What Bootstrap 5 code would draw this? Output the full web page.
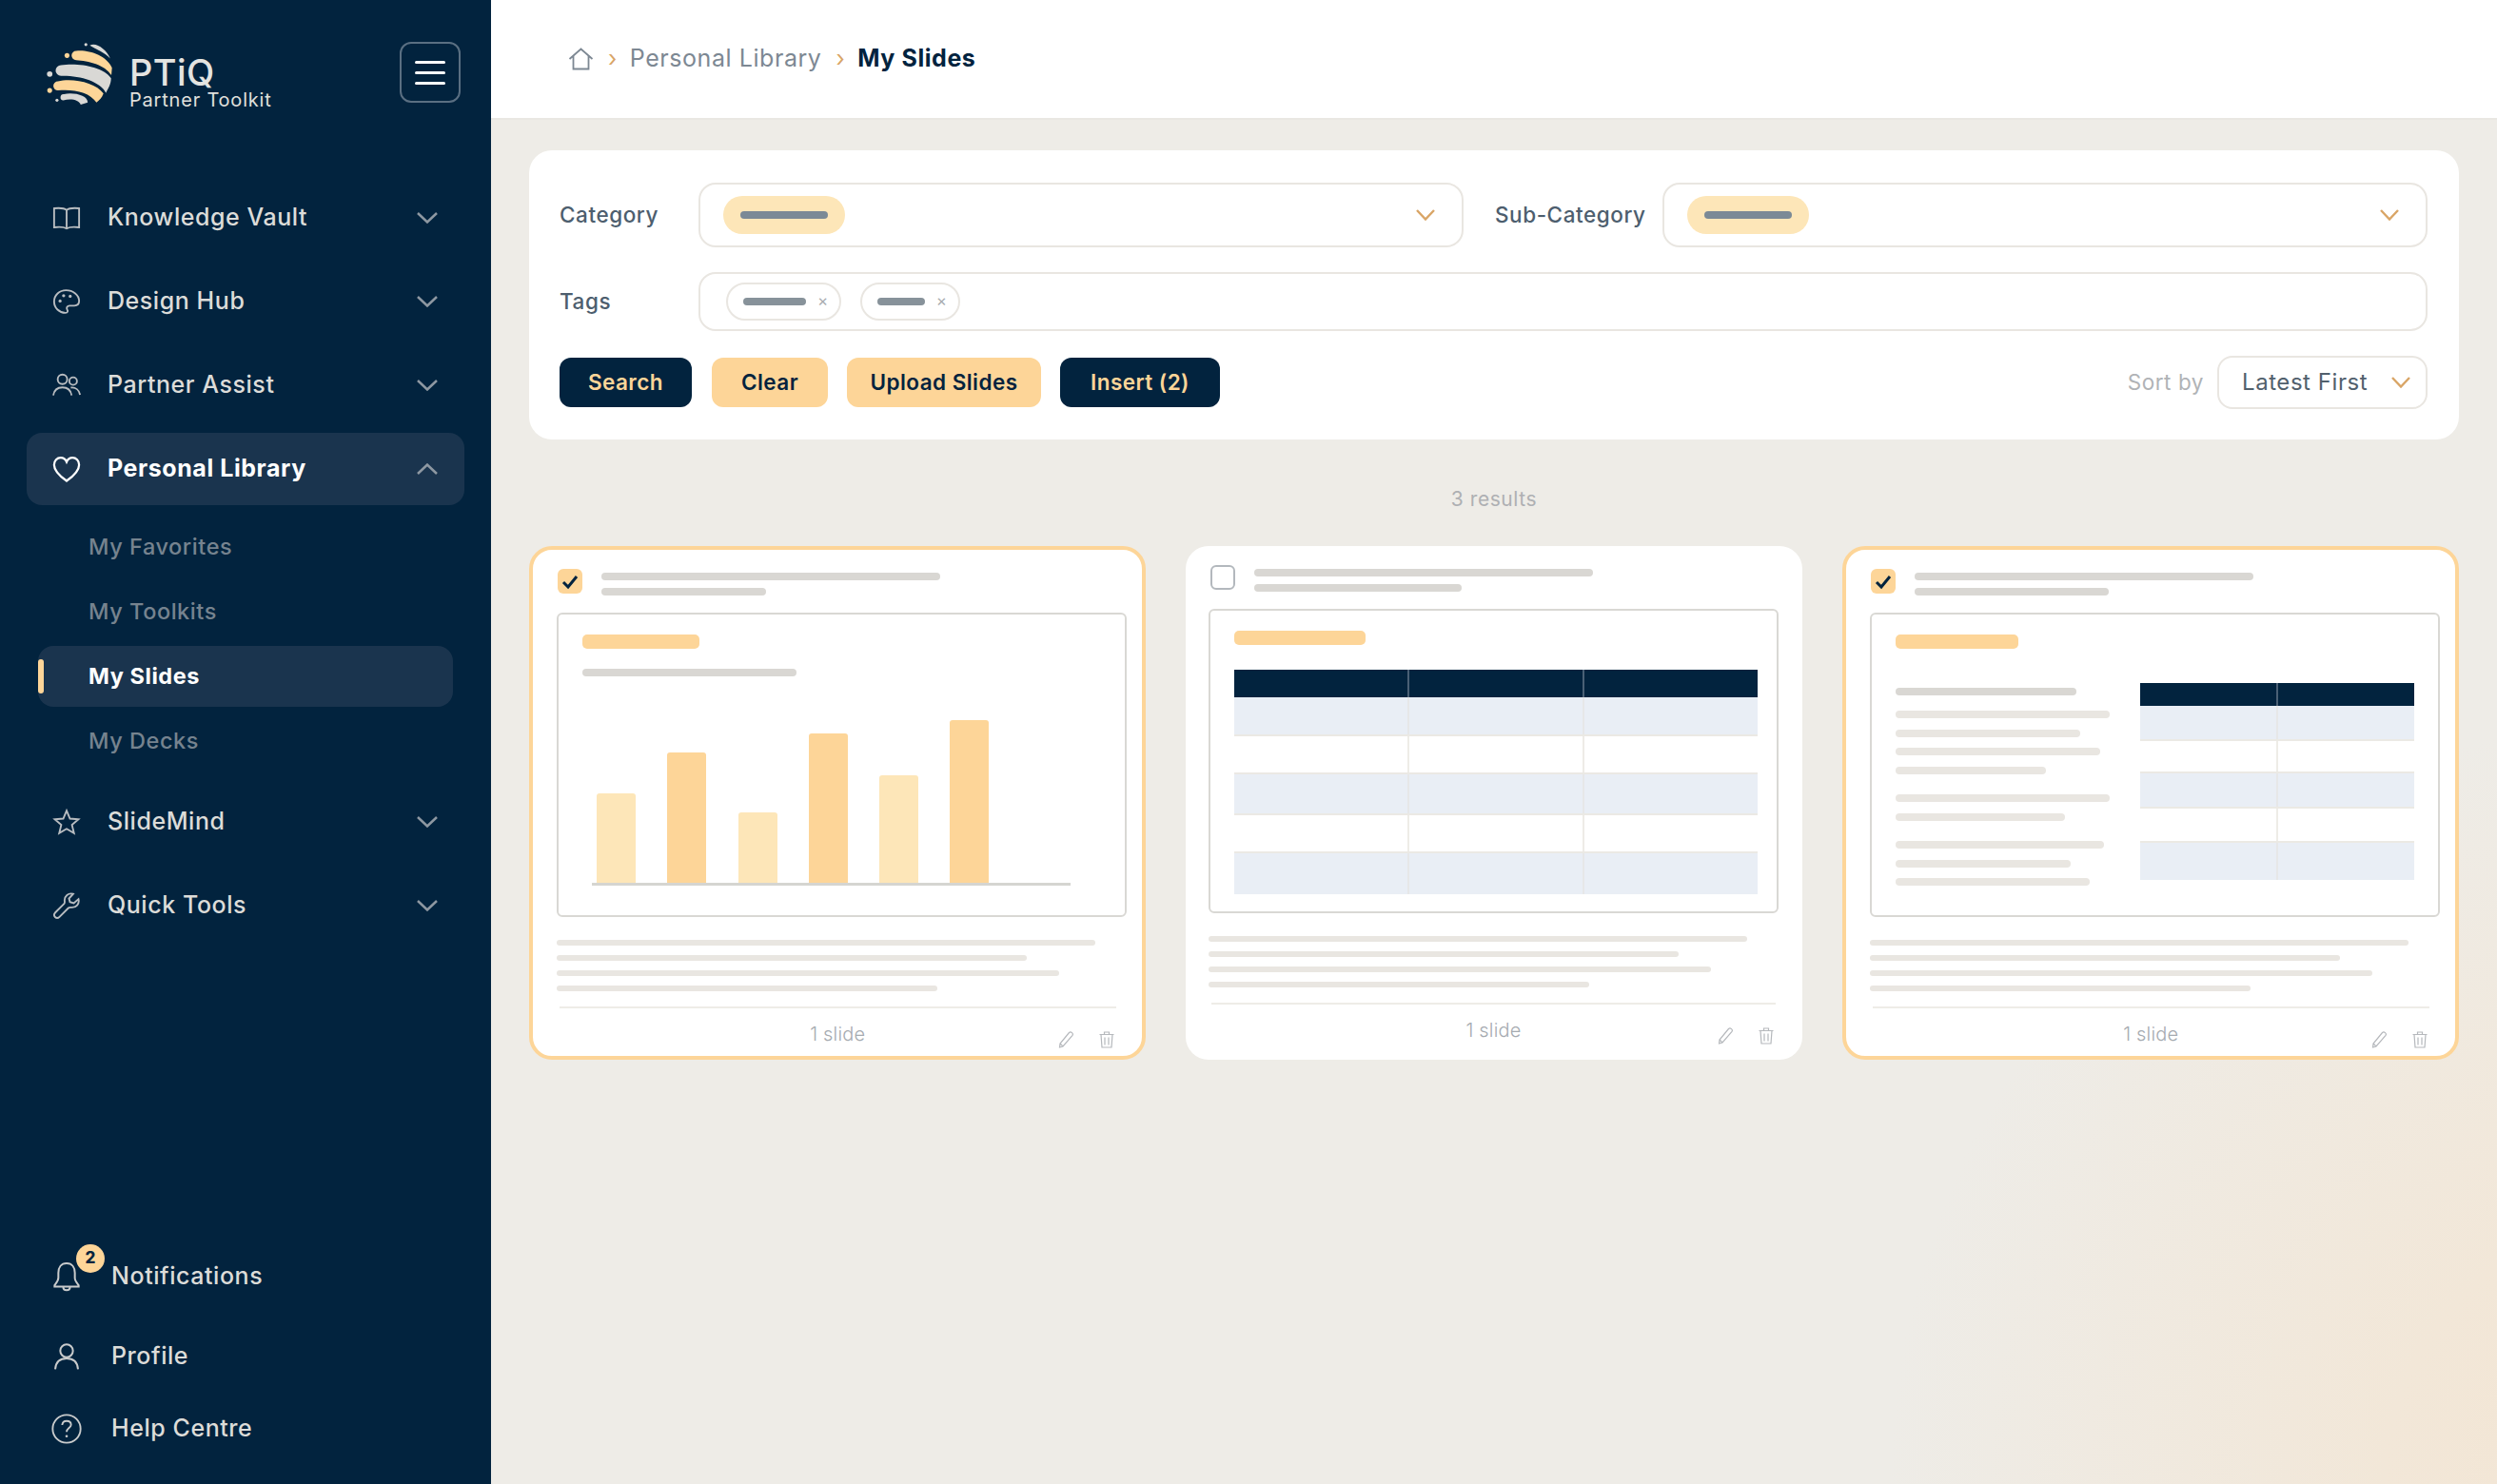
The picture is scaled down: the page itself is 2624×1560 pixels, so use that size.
<!DOCTYPE html>
<html lang="en"><head><meta charset="utf-8"><title>PTiQ</title>
<link href="https://cdn.jsdelivr.net/npm/bootstrap@5.3.0/dist/css/bootstrap.min.css" rel="stylesheet">
<style>
:root{--navy:#02233e;--peach:#fdd598;--cream:#fde6b8;--line:#e9e6e1;--bar:#d9d7d3;}
html,body{height:100%;}
body{font-family:Inter,"Liberation Sans",sans-serif;background:#eeece7;overflow:hidden;letter-spacing:.035em;}
.app-shell{height:1560px;width:2624px;}
.side-panel{width:516px;flex:none;background:var(--navy);height:1560px;padding:0 28px 20px;color:#dcdcd9;}
.brand-row{height:191px;padding:44px 4px 0 20px;}
.brand-name{font-size:38px;line-height:38px;font-weight:500;color:#e4e4e1;margin-top:13px;letter-spacing:.01em;}
.brand-sub{font-size:20px;line-height:22px;color:#e0e0dd;margin-top:-1px;letter-spacing:.04em;}
.burger{width:64px;height:64px;border:2px solid #5a6f82;border-radius:12px;background:transparent;padding:0;}
.burger span{display:block;width:32px;height:3px;background:#fff;border-radius:2px;margin:8px auto;}
.nav-entry{height:76px;margin-bottom:12px;padding:0 28px 0 27px;border-radius:16px;font-size:25px;font-weight:500;color:#dcdcd9;}
.nav-entry .ico{width:30px;height:30px;margin-right:28px;flex:none;color:#b9bdc1;}
.nav-entry.is-open{background:#1a344e;color:#fff;font-weight:700;}
.nav-entry.is-open .ico{color:#fff;}
.ico svg,.fill-svg{display:block;width:100%;height:100%;}
.chev{width:22px;height:12px;flex:none;}
.sub-list{margin:0 12px 11px;}
.sub-entry{height:64px;margin-bottom:4px;padding-left:53px;font-size:23.5px;font-weight:500;color:#76838f;border-radius:16px;position:relative;}
.sub-entry.is-here{background:#1a344e;color:#fff;font-weight:700;}
.sub-entry.is-here::before{content:"";position:absolute;left:0;top:14px;width:6px;height:36px;border-radius:3px;background:var(--peach);}
.foot-entry{height:76px;padding-left:26px;font-size:25px;font-weight:500;color:#dcdcd9;position:relative;}
.foot-entry .ico{width:32px;height:32px;margin-right:31px;color:#c9cbcc;flex:none;}
.note-dot{position:absolute;left:52px;top:4px;width:30px;height:30px;border-radius:50%;background:var(--peach);color:var(--navy);font-size:17px;font-weight:800;display:flex;align-items:center;justify-content:center;letter-spacing:0;}
.main-panel{background:radial-gradient(ellipse 800px 800px at 2270px 1560px,#f3e5d3 0%,#f2e7d8 35%,#eeece7 100%);height:1560px;}
.crumb-bar{height:126px;background:#fff;border-bottom:2px solid #e9e7e2;padding-left:81px;font-size:25px;color:#7d8893;}
.crumb-sep{color:#d9a566;margin:0 13px 0 15px;font-size:24px;}
.crumb-now{color:var(--navy);font-weight:700;}
.work-area{padding:32px 40px 0;}
.filter-box{background:#fff;border-radius:24px;height:304px;padding:34px 33px 32px 32px;}
.f-row{margin-bottom:26px;}
.f-label{width:146px;flex:none;font-size:22.5px;font-weight:500;color:#4d5e6e;}
.f-label.second{width:176px;margin-left:33px;}
.f-select{flex:1 1 0;height:68px;border:2px solid var(--line);border-radius:18px;padding:0 28px 0 24px;}
.f-tags{flex:1 1 0;height:62px;border:2px solid var(--line);border-radius:18px;padding:0 0 0 27px;gap:20px;}
.pick-pill{width:128px;height:40px;background:var(--cream);border-radius:20px;display:flex;align-items:center;justify-content:center;}
.pick-pill i{display:block;width:92px;height:8px;background:#7b8a96;border-radius:4px;}
.v-chev{width:20px;height:12px;flex:none;}
.tag-chip{height:40px;border:2px solid var(--line);border-radius:20px;padding:0 11px 0 16px;font-size:17px;color:#a9adb1;font-style:normal;}
.tag-chip b{display:block;height:8px;background:#87929a;border-radius:4px;margin-right:12px;}
.act-row{height:56px;}
.btn-nvy,.btn-pch{height:52px;border-radius:12px;border:0;font-size:22.5px;font-weight:600;padding:0;letter-spacing:.02em;}
.btn-nvy{background:var(--navy);color:var(--peach);}
.btn-pch{background:var(--peach);color:var(--navy);}
.btn-nvy:hover{background:var(--navy);color:var(--peach);}
.btn-pch:hover{background:var(--peach);color:var(--navy);}
.sort-lbl{font-size:22.5px;color:#b0b3b6;margin-right:14px;}
.sort-box{width:221px;height:56px;border:2px solid var(--line);border-radius:16px;padding:0 16px 0 24px;font-size:24px;color:#51606d;}
.res-count{height:112px;padding-top:49px;text-align:center;font-size:21px;color:#aeb0b3;line-height:28px;}
.cards-row{--bs-gutter-x:42px;--bs-gutter-y:0;}
.slide-card{height:540px;background:#fff;border-radius:24px;padding:20px 25px 0 24px;}
.slide-card.picked{border:4px solid var(--peach);padding:20px 16px 0 25px;}
.tick{width:26px;height:26px;border-radius:6px;flex:none;margin-left:2px;border:2px solid #b3b8bd;}
.picked .tick{background:var(--peach);border:0;margin-left:1px;}
.card-head{gap:20px;height:26px;margin-bottom:20px;}
.bar-t{height:8px;border-radius:4px;background:var(--bar);margin-top:4px;}
.bar-t+.bar-t{margin-top:8px;}
.mini-slide{height:320px;border:2px solid #d9d8d4;border-radius:6px;padding:21px 25px 0;}
.o-bar{height:15px;background:var(--peach);border-radius:5px;}
.g-bar{height:8px;background:var(--bar);border-radius:4px;margin-top:21px;}
.chart-box{height:220px;margin-left:10px;width:503px;border-bottom:3px solid #d5d5d1;padding-left:5px;gap:33.3px;}
.chart-box i{display:block;width:41px;border-radius:3px 3px 0 0;background:var(--peach);}
.chart-box i.lt{background:var(--cream);}
.copy-lines{margin-top:24px;}
.copy-lines i{display:block;height:6px;border-radius:3px;background:var(--line);margin-bottom:10px;}
.card-foot{margin:16px 11.5px 0 3px;border-top:2px solid #eeece7;display:grid;grid-template-columns:1fr auto 1fr;}
.plain-card .card-foot{margin-right:3px;}
.card-foot span{grid-column:2;font-size:20px;font-weight:300;color:#a6abb1;line-height:26px;margin-top:14px;letter-spacing:.01em;}
.foot-tools{grid-column:3;justify-content:flex-end;gap:27px;padding:24px 2px 0 0;}
.foot-tools svg{width:16px;height:18px;display:block;}
.mini-tbl{width:550px;margin-top:26px;}
.mini-row{display:flex;border-bottom:2px solid #ebe9e4;}
.mini-row>i{flex:1 1 0;display:block;}
.mini-row>i+i{border-left:2px solid #eeece7;}
.mini-row.shade{background:#e9eef5;}
.mini-row.shade>i+i{border-left-color:#e6e7e8;}
.mini-row.top{background:var(--navy);border-bottom:0;}
.mini-row.top>i+i{border-left-color:#4a6075;}
.mini-row:last-child{border-bottom:0;}
.two-col{margin-top:36px;}
.lines-col{width:256.5px;padding-top:4.5px;flex:none;}
.lines-col i{display:block;height:8px;border-radius:4px;background:var(--line);margin-bottom:11.5px;}
.lines-col i.hd{background:var(--bar);margin-bottom:16.5px;}
.lines-col i.brk{margin-bottom:21.5px;}
.mini-tbl.narrow{width:292.5px;margin-top:0;}
</style></head>
<body>
<div class="app-shell d-flex">
<aside class="side-panel d-flex flex-column">
  <div class="brand-row d-flex align-items-start justify-content-between">
    <div class="d-flex">
      <svg width="72" height="68" viewBox="50 50 225 213" class="flex-none me-3"><g fill="#d9d8d5"><path d="M195 62C215 50 250 75 262 105 245 85 215 75 195 62Z"/><path d="M100 127C150 118 240 130 265 170 265 190 255 205 248 218 230 180 160 160 100 162A17.500 17.500 0 0 1 100 127Z"/><path d="M110 222C140 215 190 225 188 250L165 257C160 240 130 235 108 243A10.500 10.500 0 0 1 110 222Z"/><circle cx="182" cy="59" r="5"/><circle cx="63" cy="156" r="9"/><circle cx="87" cy="242" r="5"/></g><g fill="#fdd598"><path d="M150 80C190 75 250 95 268 135L266 160C245 125 190 112 150 110A15 15 0 0 1 150 80Z"/><path d="M90 180C140 168 215 185 240 220 235 235 225 243 217 250 195 215 140 205 90 210A15 15 0 0 1 90 180Z"/><circle cx="120" cy="95" r="8"/><circle cx="63" cy="210" r="8"/></g></svg>
      <div><div class="brand-name">PTiQ</div><div class="brand-sub">Partner Toolkit</div></div>
    </div>
    <button class="burger d-flex flex-column justify-content-center" aria-label="menu"><span class="my-1"></span><span class="my-1"></span><span class="my-1"></span></button>
  </div>

  <div class="nav-entry d-flex align-items-center"><span class="ico"><svg viewBox="0 0 24 24" fill="none" stroke="currentColor" stroke-width="1.500"><path d="M12 5.500C10 3.800 6 3.500 1.500 4V20C6 19.500 10 19.800 12 21 14 19.800 18 19.500 22.500 20V4C18 3.500 14 3.800 12 5.500ZM12 5.500V21"/></svg></span><span class="flex-grow-1">Knowledge Vault</span><svg class="chev" viewBox="0 0 22 12" fill="none" stroke="#8e98a2" stroke-width="2.500"><path d="M1 1L11 10.500 21 1"/></svg></div>
  <div class="nav-entry d-flex align-items-center"><span class="ico"><svg viewBox="0 0 24 24" fill="none" stroke="currentColor" stroke-width="1.500"><path d="M11.500 2.500C6 2.500 1.500 6.500 1.500 12S6 21.500 11 21.500C13 21.500 13.300 20 12.500 18.800 11.500 17.200 12.500 15.500 14.500 15.500H18.500C21 15.500 22.500 13.800 22.500 11.500 22.500 6.500 17.500 2.500 11.500 2.500Z"/><g fill="currentColor" stroke="none"><circle cx="6.500" cy="11.500" r="1.300"/><circle cx="9.500" cy="7" r="1.300"/><circle cx="15" cy="7.500" r="1.300"/></g></svg></span><span class="flex-grow-1">Design Hub</span><svg class="chev" viewBox="0 0 22 12" fill="none" stroke="#8e98a2" stroke-width="2.500"><path d="M1 1L11 10.500 21 1"/></svg></div>
  <div class="nav-entry d-flex align-items-center"><span class="ico"><svg viewBox="0 0 24 24" fill="none" stroke="currentColor" stroke-width="1.500"><circle cx="8.500" cy="7" r="4"/><circle cx="17.500" cy="8.500" r="3.200"/><path d="M.8 20.500C1.500 16 4.500 13.800 8.500 13.800S15.500 16 16.200 20.500M15.500 14C19.500 13.500 22.500 16 23.300 20"/></svg></span><span class="flex-grow-1">Partner Assist</span><svg class="chev" viewBox="0 0 22 12" fill="none" stroke="#8e98a2" stroke-width="2.500"><path d="M1 1L11 10.500 21 1"/></svg></div>
  <div class="nav-entry is-open d-flex align-items-center"><span class="ico"><svg viewBox="0 0 24 24" fill="none" stroke="currentColor" stroke-width="1.800"><path d="M12 22C5 17 1.500 13 1.500 8.500 1.500 5 4 2.500 7 2.500 9.200 2.500 11 3.700 12 6 13 3.700 14.800 2.500 17 2.500 20 2.500 22.500 5 22.500 8.500 22.500 13 19 17 12 22Z"/></svg></span><span class="flex-grow-1">Personal Library</span><svg class="chev" viewBox="0 0 22 12" fill="none" stroke="#8e98a2" stroke-width="2.500"><path d="M1 11L11 1.500 21 11"/></svg></div>
  <div class="sub-list">
    <div class="sub-entry d-flex align-items-center">My Favorites</div>
    <div class="sub-entry d-flex align-items-center">My Toolkits</div>
    <div class="sub-entry is-here d-flex align-items-center">My Slides</div>
    <div class="sub-entry d-flex align-items-center">My Decks</div>
  </div>
  <div class="nav-entry d-flex align-items-center"><span class="ico"><svg viewBox="0 0 24 24" fill="none" stroke="currentColor" stroke-width="1.500"><path d="M12 2.500L14.800 9.200 22 9.800 16.500 14.500 18.200 21.500 12 17.800 5.800 21.500 7.500 14.500 2 9.800 9.200 9.200Z"/></svg></span><span class="flex-grow-1">SlideMind</span><svg class="chev" viewBox="0 0 22 12" fill="none" stroke="#8e98a2" stroke-width="2.500"><path d="M1 1L11 10.500 21 1"/></svg></div>
  <div class="nav-entry d-flex align-items-center"><span class="ico"><svg viewBox="0 0 24 24" fill="none" stroke="currentColor" stroke-width="1.500"><path d="M22 6.500L18 10 14.800 9 14 6 17.500 2.200C13.500 1 10 4 10.300 8 10.400 9 10.500 9.800 10 10.300L2.500 17.800C1.200 19.200 1.500 20.800 2.300 21.600 3.200 22.500 4.800 22.700 6 21.500L13.500 14C14.200 13.300 15 13.500 16 13.500 20 13.800 23 10.500 22 6.500Z"/></svg></span><span class="flex-grow-1">Quick Tools</span><svg class="chev" viewBox="0 0 22 12" fill="none" stroke="#8e98a2" stroke-width="2.500"><path d="M1 1L11 10.500 21 1"/></svg></div>

  <div class="mt-auto">
    <div class="foot-entry d-flex align-items-center mb-2"><span class="ico"><svg viewBox="0 0 24 24" fill="none" stroke="currentColor" stroke-width="1.500"><path d="M12 1.500C7.500 1.500 5.500 5 5.500 9V13C5.500 15.500 4 17 2.500 18.800V19.800H21.500V18.800C20 17 18.500 15.500 18.500 13V9C18.500 5 16.500 1.500 12 1.500ZM9.300 20C9.300 23.500 14.700 23.500 14.700 20"/></svg></span>Notifications<span class="note-dot">2</span></div>
    <div class="foot-entry d-flex align-items-center"><span class="ico"><svg viewBox="0 0 24 24" fill="none" stroke="currentColor" stroke-width="1.500"><circle cx="12" cy="7.500" r="5"/><path d="M3 22C3.500 16 7 13.500 12 13.500S20.500 16 21 22"/></svg></span>Profile</div>
    <div class="foot-entry d-flex align-items-center"><span class="ico"><svg viewBox="0 0 24 24" fill="none" stroke="currentColor" stroke-width="1.400"><circle cx="12" cy="12" r="11"/><path d="M8.500 9C8.700 6.800 10.200 5.800 12 5.800 14 5.800 15.500 7 15.500 8.800 15.500 11.200 12 11.500 12 14.500"/><circle cx="12" cy="17.800" r="1" fill="currentColor" stroke="none"/></svg></span>Help Centre</div>
  </div>
</aside>

<main class="main-panel flex-grow-1 d-flex flex-column">
  <div class="crumb-bar d-flex align-items-center flex-none">
    <svg width="27" height="24" viewBox="0 0 27 24" fill="none" stroke="#7d8893" stroke-width="1.800"><path d="M1.500 12L13.500 1.500 25.500 12M5.500 9V22.500H21.500V9"/></svg>
    <span class="crumb-sep">›</span><span>Personal Library</span><span class="crumb-sep">›</span><span class="crumb-now">My Slides</span>
  </div>
  <div class="work-area">
    <div class="filter-box">
      <div class="f-row d-flex align-items-center">
        <div class="f-label">Category</div>
        <div class="f-select d-flex align-items-center justify-content-between"><span class="pick-pill"><i></i></span><svg class="v-chev" viewBox="0 0 20 12" fill="none" stroke="#d9a566" stroke-width="2.400"><path d="M1 1L10 10.500 19 1"/></svg></div>
        <div class="f-label second">Sub-Category</div>
        <div class="f-select d-flex align-items-center justify-content-between"><span class="pick-pill"><i></i></span><svg class="v-chev" viewBox="0 0 20 12" fill="none" stroke="#d9a566" stroke-width="2.400"><path d="M1 1L10 10.500 19 1"/></svg></div>
      </div>
      <div class="f-row d-flex align-items-center">
        <div class="f-label">Tags</div>
        <div class="f-tags d-flex align-items-center">
          <span class="tag-chip d-flex align-items-center"><b style="width:66px"></b>×</span>
          <span class="tag-chip d-flex align-items-center"><b style="width:50px"></b>×</span>
        </div>
      </div>
      <div class="act-row d-flex align-items-center">
        <button class="btn btn-nvy" style="width:139px">Search</button>
        <button class="btn btn-pch ms-20" style="width:122px;margin-left:21px">Clear</button>
        <button class="btn btn-pch" style="width:204px;margin-left:20px">Upload Slides</button>
        <button class="btn btn-nvy" style="width:168px;margin-left:20px">Insert (2)</button>
        <span class="sort-lbl ms-auto">Sort by</span>
        <div class="sort-box d-flex align-items-center justify-content-between">Latest First<svg class="v-chev" viewBox="0 0 20 12" fill="none" stroke="#d9a566" stroke-width="2.400"><path d="M1 1L10 10.500 19 1"/></svg></div>
      </div>
    </div>
    <div class="res-count">3 results</div>
    <div class="row cards-row">
      <div class="col-4">
        <div class="slide-card picked">
          <div class="card-head d-flex"><span class="tick"><svg class="fill-svg" viewBox="0 0 26 26" fill="none" stroke="#02233e" stroke-width="3"><path d="M6 14L11 19 20 8"/></svg></span><div class="flex-grow-1"><div class="bar-t" style="width:356px"></div><div class="bar-t" style="width:173px"></div></div></div>
          <div class="mini-slide">
            <div class="o-bar" style="width:123px"></div><div class="g-bar" style="width:225px"></div>
            <div class="chart-box d-flex align-items-end"><i class="lt" style="height:94px"></i><i style="height:137px"></i><i class="lt" style="height:74px"></i><i style="height:157px"></i><i class="lt" style="height:113px"></i><i style="height:171px"></i></div>
          </div>
          <div class="copy-lines"><i style="width:566px"></i><i style="width:494px"></i><i style="width:528px"></i><i style="width:400px"></i></div>
          <div class="card-foot"><span>1 slide</span><div class="foot-tools d-flex"><svg viewBox="0 0 16 18" fill="none" stroke="#b5b8bc" stroke-width="1.200"><path d="M1.500 17L2 13 11.500 1.500C12.500.7 13.500.8 14.500 1.600S15.500 3.500 15 4.300L5 16ZM2 13L5 16"/></svg><svg viewBox="0 0 16 18" fill="none" stroke="#b5b8bc" stroke-width="1.200"><path d="M.5 3.500H15.500M5.500 3.500V1H10.500V3.500M2 3.500L3 17H13L14 3.500M6 6.500V14.500M10 6.500V14.500"/></svg></div></div>
        </div>
      </div>
      <div class="col-4">
        <div class="slide-card plain-card">
          <div class="card-head d-flex"><span class="tick"></span><div class="flex-grow-1"><div class="bar-t" style="width:356px"></div><div class="bar-t" style="width:218px"></div></div></div>
          <div class="mini-slide">
            <div class="o-bar" style="width:138px"></div>
            <div class="mini-tbl">
              <div class="mini-row top" style="height:29px"><i></i><i></i><i></i></div>
              <div class="mini-row shade" style="height:41px"><i></i><i></i><i></i></div>
              <div class="mini-row" style="height:40px"><i></i><i></i><i></i></div>
              <div class="mini-row shade" style="height:43px"><i></i><i></i><i></i></div>
              <div class="mini-row" style="height:40px"><i></i><i></i><i></i></div>
              <div class="mini-row shade" style="height:43px"><i></i><i></i><i></i></div>
            </div>
          </div>
          <div class="copy-lines"><i style="width:566px"></i><i style="width:494px"></i><i style="width:528px"></i><i style="width:400px"></i></div>
          <div class="card-foot"><span>1 slide</span><div class="foot-tools d-flex"><svg viewBox="0 0 16 18" fill="none" stroke="#b5b8bc" stroke-width="1.200"><path d="M1.500 17L2 13 11.500 1.500C12.500.7 13.500.8 14.500 1.600S15.500 3.500 15 4.300L5 16ZM2 13L5 16"/></svg><svg viewBox="0 0 16 18" fill="none" stroke="#b5b8bc" stroke-width="1.200"><path d="M.5 3.500H15.500M5.500 3.500V1H10.500V3.500M2 3.500L3 17H13L14 3.500M6 6.500V14.500M10 6.500V14.500"/></svg></div></div>
        </div>
      </div>
      <div class="col-4">
        <div class="slide-card picked">
          <div class="card-head d-flex"><span class="tick"><svg class="fill-svg" viewBox="0 0 26 26" fill="none" stroke="#02233e" stroke-width="3"><path d="M6 14L11 19 20 8"/></svg></span><div class="flex-grow-1"><div class="bar-t" style="width:356px"></div><div class="bar-t" style="width:204px"></div></div></div>
          <div class="mini-slide">
            <div class="o-bar" style="width:129px"></div>
            <div class="two-col d-flex">
              <div class="lines-col"><i class="hd" style="width:190px"></i><i style="width:225px"></i><i style="width:194px"></i><i style="width:215px"></i><i class="brk" style="width:158px"></i><i style="width:225px"></i><i class="brk" style="width:178px"></i><i style="width:219px"></i><i style="width:184px"></i><i style="width:204px"></i></div>
              <div class="mini-tbl narrow">
                <div class="mini-row top" style="height:24px"><i></i><i></i></div>
                <div class="mini-row shade" style="height:37px"><i></i><i></i></div>
                <div class="mini-row" style="height:34px"><i></i><i></i></div>
                <div class="mini-row shade" style="height:37px"><i></i><i></i></div>
                <div class="mini-row" style="height:36px"><i></i><i></i></div>
                <div class="mini-row shade" style="height:39px"><i></i><i></i></div>
              </div>
            </div>
          </div>
          <div class="copy-lines"><i style="width:566px"></i><i style="width:494px"></i><i style="width:528px"></i><i style="width:400px"></i></div>
          <div class="card-foot"><span>1 slide</span><div class="foot-tools d-flex"><svg viewBox="0 0 16 18" fill="none" stroke="#b5b8bc" stroke-width="1.200"><path d="M1.500 17L2 13 11.500 1.500C12.500.7 13.500.8 14.500 1.600S15.500 3.500 15 4.300L5 16ZM2 13L5 16"/></svg><svg viewBox="0 0 16 18" fill="none" stroke="#b5b8bc" stroke-width="1.200"><path d="M.5 3.500H15.500M5.500 3.500V1H10.500V3.500M2 3.500L3 17H13L14 3.500M6 6.500V14.500M10 6.500V14.500"/></svg></div></div>
        </div>
      </div>
    </div>
  </div>
</main>
</div>
<script src="https://cdn.jsdelivr.net/npm/bootstrap@5.3.0/dist/js/bootstrap.bundle.min.js"></script>
</body></html>
